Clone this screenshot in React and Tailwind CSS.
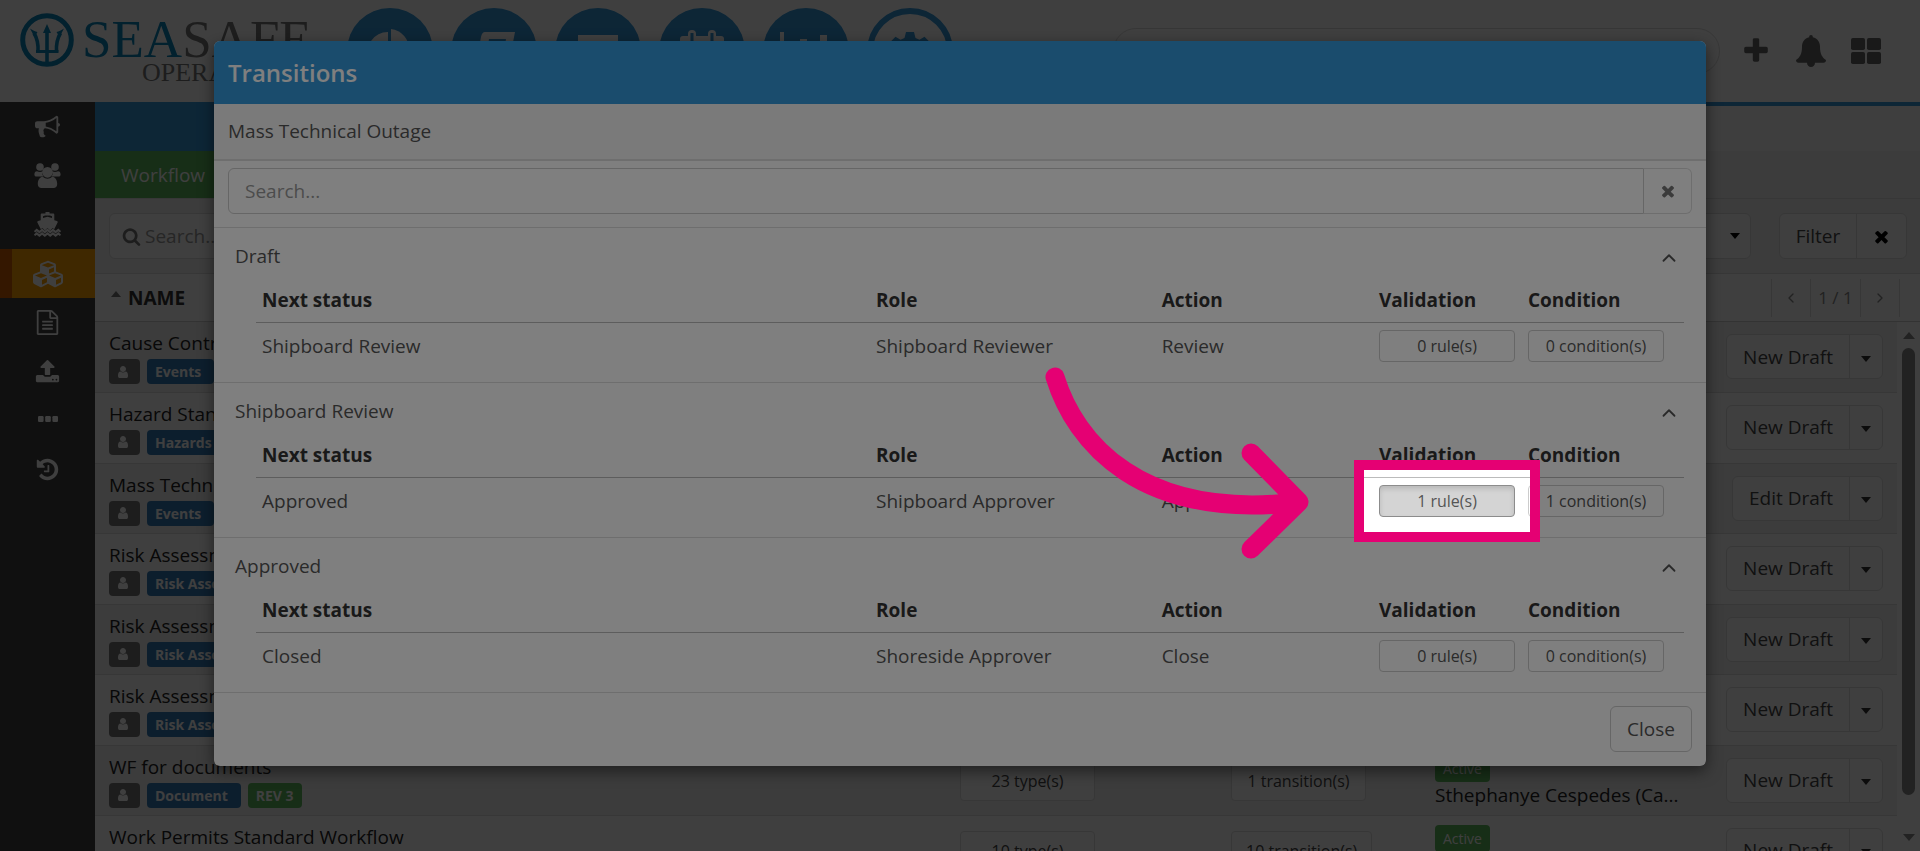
// src/App.jsx

import React, { useState } from 'react';
import clsx from 'clsx';
import { ChevronLeft, ChevronRight, ChevronUp } from 'lucide-react';
import { FaCubes } from 'react-icons/fa';

// Font Awesome 4 glyphs, drawn on the 1792 grid
const glyphs = {
  bullhorn:
    'M1664 640q53 0 90.5 37.5t37.5 90.5-37.5 90.5-90.5 37.5v384q0 52-38 90t-90 38q-417-347-812-380-58 19-91 66t-31 100.5 40 92.5q-20 33-23 65.5t6 58 33.5 55 48 50 61.5 50.5q-29 58-111.5 83t-168.5 11.5-132-55.5q-7-23-29.5-87.5t-32-94.5-23-89-15-101 3.5-98.5 22-110.5h-122q-66 0-113-47t-47-113v-192q0-66 47-113t113-47h480q435 0 896-384 52 0 90 38t38 90v384zm-128 604v-954q-394 302-768 343v270q377 42 768 341z',
  times:
    'M1490 1322q0 40-28 68l-136 136q-28 28-68 28t-68-28l-294-294-294 294q-28 28-68 28t-68-28l-136-136q-28-28-28-68t28-68l294-294-294-294q-28-28-28-68t28-68l136-136q28-28 68-28t68 28l294 294 294-294q28-28 68-28t68 28l136 136q28 28 28 68t-28 68l-294 294 294 294q28 28 28 68z',
  search:
    'M1216 832q0-185-131.5-316.5t-316.5-131.5-316.5 131.5-131.5 316.5 131.5 316.5 316.5 131.5 316.5-131.5 131.5-316.5zm512 832q0 52-38 90t-90 38q-54 0-90-38l-343-342q-179 124-399 124-143 0-273.5-55.5t-225-150-150-225-55.5-273.5 55.5-273.5 150-225 225-150 273.5-55.5 273.5 55.5 225 150 150 225 55.5 273.5q0 220-124 399l343 343q37 37 37 90z',
  user:
    'M1536 1399q0 109-62.5 187t-150.5 78h-854q-88 0-150.5-78t-62.5-187q0-85 8.5-160.5t31.5-152 58.5-131 94-89 134.5-34.5q131 128 313 128t313-128q76 0 134.5 34.5t94 89 58.5 131 31.5 152 8.5 160.5zm-256-887q0 159-112.5 271.5t-271.5 112.5-271.5-112.5-112.5-271.5 112.5-271.5 271.5-112.5 271.5 112.5 112.5 271.5z',
  plus:
    'M1600 736v192q0 40-28 68t-68 28h-416v416q0 40-28 68t-68 28h-192q-40 0-68-28t-28-68v-416h-416q-40 0-68-28t-28-68v-192q0-40 28-68t68-28h416v-416q0-40 28-68t68-28h192q40 0 68 28t28 68v416h416q40 0 68 28t28 68z',
  history:
    'M1664 896q0 156-61 298t-164 245-245 164-298 61q-172 0-327-72.5t-264-204.5q-7-10-6.5-22.5t8.5-20.5l137-138q10-9 25-9 16 2 23 12 73 95 179 147t225 52q104 0 198.5-40.5t163.5-109.5 109.5-163.5 40.5-198.5-40.5-198.5-109.5-163.5-163.5-109.5-198.5-40.5q-98 0-188 35.5t-160 101.5l137 138q31 30 14 69-17 40-59 40h-448q-26 0-45-19t-19-45v-448q0-42 40-59 39-17 69 14l130 129q107-101 244.5-156.5t284.5-55.5q156 0 298 61t245 164 164 245 61 298zm-640-288v448q0 14-9 23t-23 9h-320q-14 0-23-9t-9-23v-64q0-14 9-23t23-9h224v-352q0-14 9-23t23-9h64q14 0 23 9t9 23z',
  fileText:
    'M1596 380q28 28 48 76t20 88v1152q0 40-28 68t-68 28h-1344q-40 0-68-28t-28-68v-1600q0-40 28-68t68-28h896q40 0 88 20t76 48zm-444-244v376h376q-10-29-22-41l-313-313q-12-12-41-22zm384 1528v-1024h-416q-40 0-68-28t-28-68v-416h-768v1536h1280zm-1024-864q0-14 9-23t23-9h704q14 0 23 9t9 23v64q0 14-9 23t-23 9h-704q-14 0-23-9t-9-23v-64zm736 224q14 0 23 9t9 23v64q0 14-9 23t-23 9h-704q-14 0-23-9t-9-23v-64q0-14 9-23t23-9h704zm0 256q14 0 23 9t9 23v64q0 14-9 23t-23 9h-704q-14 0-23-9t-9-23v-64q0-14 9-23t23-9h704z',
  upload:
    'M1344 1472q0-26-19-45t-45-19-45 19-19 45 19 45 45 19 45-19 19-45zm256 0q0-26-19-45t-45-19-45 19-19 45 19 45 45 19 45-19 19-45zm128-224v320q0 40-28 68t-68 28h-1472q-40 0-68-28t-28-68v-320q0-40 28-68t68-28h427q21 56 70.5 92t110.5 36h256q61 0 110.5-36t70.5-92h427q40 0 68 28t28 68zm-325-648q-17 40-59 40h-256v448q0 26-19 45t-45 19h-256q-26 0-45-19t-19-45v-448h-256q-42 0-59-40-17-39 14-69l448-448q18-19 45-19t45 19l448 448q31 30 14 69z',
};

const Glyph = ({ name, className }) => (
  <svg viewBox="0 0 1792 1792" fill="currentColor" className={className} aria-hidden="true">
    <path d={glyphs[name]} />
  </svg>
);

const Caret = ({ up, className }) => (
  <svg viewBox="0 0 10 6" fill="currentColor" className={clsx('h-[6px] w-[10px]', className)} aria-hidden="true">
    <path d={up ? 'M0 6 5 0l5 6z' : 'M0 0h10L5 6z'} />
  </svg>
);

const UsersIcon = () => (
  <svg viewBox="0 0 27 25" fill="currentColor" className="h-[25px] w-[27px]" aria-hidden="true">
    <circle cx="6" cy="4" r="3.8" />
    <circle cx="21" cy="4" r="3.8" />
    <path d="M3 8.2c1.800 1 3.800 1 5.400.3-.6 2 .2 4 1.200 5.100H2.800C1 13.600.4 12.500.4 11.500.4 10 1 8.200 3 8.200zM24 8.200c-1.800 1-3.800 1-5.400.3.6 2-.2 4-1.200 5.100h6.800c1.800 0 2.400-1.100 2.400-2.100 0-1.500-.6-3.300-2.600-3.300z" />
    <circle cx="13.500" cy="9.300" r="5.400" />
    <path d="M8.800 13.700c2.800 2.600 6.600 2.600 9.400 0 3.400.2 5 3.800 5 7.300 0 2.500-1.600 4-3.700 4h-12c-2.100 0-3.700-1.500-3.700-4 0-3.500 1.600-7.100 5-7.300z" />
  </svg>
);

const ShipIcon = () => (
  <svg viewBox="0 0 27 25" fill="currentColor" className="h-[25px] w-[27px]" aria-hidden="true">
    <path
      fillRule="evenodd"
      d="M11.500 0h4v1.500h3.500c.8 0 1.300.5 1.300 1.300v5.500l2.600.8c.8.3 1 1 .6 1.600l-3.300 6.600-1.600-1.200-2.500 2.300-2.600-2.300-2.600 2.300-2.500-2.300-1.600 1.200-3.300-6.600c-.4-.6-.2-1.300.6-1.600l2.600-.8V2.800c0-.8.5-1.300 1.300-1.300h3.500zM9 4.200v1.800l4.500-1.300L18 6V4.200l-2-.7h-5z"
    />
    <path
      d="M.5 19.800l2.200-1.900 2.700 2.200 2.700-2.200 2.700 2.200 2.700-2.200 2.700 2.200 2.700-2.200 2.700 2.200 2.700-2.200 2.200 1.900M.5 23.300l2.200-1.900 2.700 2.200 2.700-2.200 2.700 2.200 2.700-2.200 2.700 2.200 2.700-2.200 2.700 2.200 2.700-2.200 2.200 1.900"
      fill="none"
      stroke="currentColor"
      strokeWidth="2"
    />
  </svg>
);

const DotsIcon = () => (
  <svg viewBox="0 0 20 10" fill="currentColor" className="h-[10px] w-5" aria-hidden="true">
    <rect width="5.600" height="6" rx="1.200" />
    <rect x="7.200" width="5.600" height="6" rx="1.200" />
    <rect x="14.400" width="5.600" height="6" rx="1.200" />
  </svg>
);

const BellIcon = () => (
  <svg viewBox="0 0 30 32" fill="currentColor" className="h-8 w-[30px]" aria-hidden="true">
    <path d="M15 0c1.200 0 1.900.8 1.800 2.200 4.800 1 7.200 5 7.200 9.300 0 7.500 2.200 11 6 13.500 0 1.700-1 2.700-2.400 2.700H19c0 2.500-1.700 4.300-4 4.300s-4-1.800-4-4.300H2.400C1 27.700 0 26.700 0 25c3.800-2.500 6-6 6-13.500 0-4.300 2.400-8.300 7.200-9.300C13.100.8 13.800 0 15 0z" />
  </svg>
);

const GridIcon = () => (
  <svg viewBox="0 0 30 26" fill="currentColor" className="h-[26px] w-[30px]" aria-hidden="true">
    <rect width="14" height="12" rx="1.800" />
    <rect x="16" width="14" height="12" rx="1.800" />
    <rect y="14" width="14" height="12" rx="1.800" />
    <rect x="16" y="14" width="14" height="12" rx="1.800" />
  </svg>
);

const Trident = () => (
  <svg viewBox="0 0 54 54" className="size-[54px]" fill="none" stroke="#0b84b8" aria-hidden="true">
    <circle cx="27" cy="27" r="24.300" strokeWidth="5" />
    <path d="M27 16v35" strokeWidth="3.600" />
    <path d="M16 38.500h22.500" strokeWidth="3" />
    <path d="M18 39c.5-7-1-14-4-19M36.500 39c-.5-7 1-14 4-19" strokeWidth="3.600" />
    <path d="M27 11l4 9h-8zM10 15.500c3 2 5 3 7.500 3.500l-3 5zM44 15.500c-3 2-5 3-7.500 3.500l3 5z" fill="#0b84b8" stroke="none" />
  </svg>
);

const modules = [
  {
    label: 'Dashboard',
    icon: (
      <>
        <path d="M41 24a20 20 0 1 0 14 34L41 44z" />
        <path d="M44 21a20 20 0 0 1 18 21H44z" />
      </>
    ),
  },
  {
    label: 'Forms',
    icon: <path d="M34 24h30l-7 36H24l6-31q1-5 4-5zm4 7-1 6h17l1-6z" fillRule="evenodd" />,
  },
  { label: 'Documents', icon: <path d="M23 27h40v32H23z" /> },
  {
    label: 'Calendar',
    icon: (
      <>
        <path d="M24 28h38q3 0 3 3v30H21V31q0-3 3-3z" />
        <rect x="29" y="22" width="8" height="14" rx="4" />
        <rect x="49" y="22" width="8" height="14" rx="4" />
        <path d="M31.500 25h3v8h-3zM51.500 25h3v8h-3z" fill="#3498db" />
      </>
    ),
  },
  { label: 'Reports', icon: <path d="M17 24h4v34h48v4H17zM37 31h7v24h-7zM57 27h7v28h-7zM27 40h6v15h-6zM47 38h6v17h-6z" /> },
  {
    label: 'Settings',
    active: true,
    icon: (
      <path
        fill="#3498db"
        d="M39 24h8l1.500 6 4 1.700 5-3 4.500 4.500-3 5 1.800 4 5.700 1.500v6l-5.700 1.500-1.800 4 3 5-4.500 4.500-5-3-4 1.700-1.500 6h-8l-1.500-6-4-1.700-5 3-4.500-4.500 3-5-1.800-4-5.700-1.500v-6l5.700-1.500 1.800-4-3-5 4.500-4.500 5 3 4-1.700z"
      />
    ),
  },
];

const sideItems = [
  { label: 'Events', icon: <Glyph name="bullhorn" className="size-[25px]" /> },
  { label: 'Crew', icon: <UsersIcon /> },
  { label: 'Vessels', icon: <ShipIcon /> },
  { label: 'Workflows', icon: <FaCubes className="size-[30px]" />, active: true },
  { label: 'Documents', icon: <Glyph name="fileText" className="size-[25px]" /> },
  { label: 'Upload', icon: <Glyph name="upload" className="size-[25px]" /> },
  { label: 'More', icon: <DotsIcon /> },
  { label: 'History', icon: <Glyph name="history" className="size-[25px]" /> },
];

const workflows = [
  { name: 'Cause Control', tag: 'Events', action: 'New Draft' },
  { name: 'Hazard Standard', tag: 'Hazards', action: 'New Draft' },
  { name: 'Mass Technical', tag: 'Events', action: 'Edit Draft' },
  { name: 'Risk Assessment', tag: 'Risk Asses', action: 'New Draft' },
  { name: 'Risk Assessment', tag: 'Risk Asses', action: 'New Draft' },
  { name: 'Risk Assessment', tag: 'Risk Asses', action: 'New Draft' },
  {
    name: 'WF for documents',
    tag: 'Document',
    rev: 'REV 3',
    types: '23 type(s)',
    transitions: '1 transition(s)',
    status: 'Active',
    owner: 'Sthephanye Cespedes (Ca...',
    action: 'New Draft',
  },
  {
    name: 'Work Permits Standard Workflow',
    types: '10 type(s)',
    transitions: '10 transition(s)',
    status: 'Active',
    action: 'New Draft',
  },
];

const sections = [
  { title: 'Draft', next: 'Shipboard Review', role: 'Shipboard Reviewer', action: 'Review', rules: 0, conditions: 0 },
  {
    title: 'Shipboard Review',
    next: 'Approved',
    role: 'Shipboard Approver',
    action: 'Approve',
    rules: 1,
    conditions: 1,
    highlighted: true,
  },
  { title: 'Approved', next: 'Closed', role: 'Shoreside Approver', action: 'Close', rules: 0, conditions: 0 },
];

const Header = () => (
  <header className="flex h-[102px] shrink-0 items-center bg-white">
    <div className="flex h-full w-[347px] shrink-0 items-start gap-2 pt-[13px] pl-5">
      <Trident />
      <div className="flex flex-col items-start font-['Liberation_Serif',serif] text-[#777]">
        <span className="text-[53px] leading-[53px]">
          <span className="text-[#0b84b8]">SEA</span>SAFE
        </span>
        <span className="ml-[60px] text-[26px] leading-[14px]">OPERATIONS</span>
      </div>
    </div>
    <nav className="flex shrink-0 gap-[18px]">
      {modules.map((item) => (
        <a key={item.label} href="#" aria-label={item.label}>
          <svg viewBox="0 0 86 86" className="size-[86px]" fill="#fff">
            {item.active ? (
              <circle cx="43" cy="43" r="40" stroke="#3498db" strokeWidth="6" />
            ) : (
              <circle cx="43" cy="43" r="43" fill="#3498db" />
            )}
            {item.icon}
          </svg>
        </a>
      ))}
    </nav>
    <div className="ml-[160px] flex h-[46px] flex-1 items-center rounded-full border border-[#ddd] pl-4 text-[#777]">
      <Glyph name="search" className="size-5" />
      <input type="search" aria-label="Search everything" className="h-full flex-1 px-2 outline-none" />
    </div>
    <div className="flex items-center gap-[25px] pr-[39px] pl-[21px] text-[#666]">
      <button type="button" aria-label="Add">
        <Glyph name="plus" className="size-[30px]" />
      </button>
      <button type="button" aria-label="Notifications">
        <BellIcon />
      </button>
      <button type="button" aria-label="Applications">
        <GridIcon />
      </button>
    </div>
  </header>
);

const Sidebar = () => (
  <aside className="w-[95px] shrink-0 bg-[#424242]">
    {sideItems.map((item) => (
      <a
        key={item.label}
        href="#"
        aria-label={item.label}
        className={clsx(
          'flex h-[49px] items-center justify-center border-x-12 text-white',
          item.active ? 'border-l-[#d35f00] border-r-[#ffa000] bg-[#ffa000]' : 'border-transparent'
        )}
      >
        {item.icon}
      </a>
    ))}
  </aside>
);

const Toolbar = () => (
  <div className="flex h-[75px] shrink-0 items-center border-b border-[#ddd] bg-[#f3f3f3] pr-[13px] pl-[14px]">
    <div className="flex h-[46px] w-[420px] items-center gap-1 rounded-md border border-[#ddd] bg-white pl-3">
      <Glyph name="search" className="size-[19px] text-[#777]" />
      <input type="search" aria-label="Search workflows" placeholder="Search..." className="min-w-0 flex-1 outline-none placeholder:text-[#999]" />
    </div>
    <button type="button" aria-label="Choose view" className="ml-auto flex h-[46px] w-[220px] items-center justify-end rounded-md border border-[#ddd] bg-white pr-[10px] text-black">
      <Caret />
    </button>
    <div className="ml-7 flex h-[46px] rounded-md border border-[#ddd] bg-white text-[#444]">
      <button type="button" className="w-[77px] border-r border-[#ddd]">Filter</button>
      <button type="button" aria-label="Clear filter" className="flex w-[49px] items-center justify-center text-black">
        <Glyph name="times" className="size-[19px]" />
      </button>
    </div>
  </div>
);

const ListHeader = () => (
  <div className="flex h-[48px] shrink-0 items-center border-b border-[#ccc] bg-white pr-[20px] pl-4">
    <button type="button" className="flex items-start gap-[7px] font-bold text-[#333]">
      <Caret up className="mt-[6px] text-[#777]" />
      NAME
    </button>
    <div className="ml-auto flex h-[38px] items-center divide-x divide-[#ddd] border-x border-[#ddd] text-[17px] text-[#888]">
      <button type="button" aria-label="Previous page" className="flex h-full w-[39px] items-center justify-center">
        <ChevronLeft className="size-4" />
      </button>
      <span className="flex h-full w-[50px] items-center justify-center">1 / 1</span>
      <button type="button" aria-label="Next page" className="flex h-full w-[38px] items-center justify-center">
        <ChevronRight className="size-4" />
      </button>
    </div>
  </div>
);

const WorkflowRow = ({ row }) => (
  <tr className="border-b border-[#ddd] align-top odd:h-[70px] odd:bg-[#f0f0f0] even:h-[71px] even:bg-white">
    <td className="px-[14px] pt-2 text-[#222]">
      <div className="leading-[26px]">{row.name}</div>
      <div className="mt-[3px] flex gap-[7px] text-[14px] leading-[25px] font-bold text-white">
        <span className="flex h-[25px] w-[31px] items-center rounded-sm bg-[#777] pl-[7px]">
          <Glyph name="user" className="size-[14px]" />
        </span>
        {row.tag && <span className="h-[25px] rounded-sm bg-[#337ab7] pr-[13px] pl-2">{row.tag}</span>}
        {row.rev && <span className="h-[25px] rounded-sm bg-[#5cb85c] px-2">{row.rev}</span>}
      </div>
    </td>
    <td className="px-[14px] pt-[15px]">
      {row.types && (
        <button type="button" className="h-10 min-w-[135px] rounded-sm border border-[#ddd] bg-white px-[14px] text-base text-[#444]">
          {row.types}
        </button>
      )}
    </td>
    <td className="px-[14px] pt-[15px]">
      {row.transitions && (
        <button type="button" className="h-10 min-w-[135px] rounded-sm border border-[#ddd] bg-white px-[14px] text-base whitespace-nowrap text-[#444]">
          {row.transitions}
        </button>
      )}
    </td>
    <td className="px-[14px] pt-[9px] text-[#222]">
      {row.status && (
        <>
          <span className="block h-[27px] w-fit rounded-sm bg-[#5cb85c] px-2 text-[14px] leading-[27px] text-white">{row.status}</span>
          <div className="leading-[26px]">{row.owner}</div>
        </>
      )}
    </td>
    <td className="px-[14px] pt-3">
      <div className="ml-auto flex h-[45px] w-fit rounded-md border border-[#ddd] bg-white text-[#444]">
        <button type="button" className="border-r border-[#ddd] px-4">{row.action}</button>
        <button type="button" aria-label="More actions" className="flex w-8 items-center justify-center pt-1 text-[#333]">
          <Caret />
        </button>
      </div>
    </td>
  </tr>
);

const WorkflowList = () => (
  <main className="flex min-w-0 flex-1 flex-col border-t-4 border-[#3498db] bg-[#fafafa]">
    <div className="h-[45px] w-[400px] shrink-0 bg-[#3498db]" />
    <div className="flex h-[48px] shrink-0 border-b border-[#ddd] bg-[#f3f3f3]">
      <button type="button" className="bg-[#5cb85c] px-[26px] text-white">Workflow</button>
    </div>
    <Toolbar />
    <ListHeader />
    <div className="flex min-h-0 flex-1 overflow-hidden">
      <table aria-label="Workflows" className="h-fit min-w-0 flex-1 table-fixed border-collapse">
        <colgroup>
          <col />
          <col className="w-[271px]" />
          <col className="w-[204px]" />
          <col className="w-[276px]" />
          <col className="w-[200px]" />
        </colgroup>
        <tbody>
          {workflows.map((row, i) => (
            <WorkflowRow key={i} row={row} />
          ))}
        </tbody>
      </table>
      <div className="flex w-[23px] shrink-0 flex-col items-center bg-white py-[9px] text-[#888]" aria-hidden="true">
        <Caret up className="h-[9px] w-[12px]" />
        <div className="mt-2 h-[447px] w-[13px] rounded-full bg-[#888]" />
        <Caret className="mt-auto h-[9px] w-[12px]" />
      </div>
    </div>
  </main>
);

// Tour step marker: dims everything outside its frame
const Spotlight = () => (
  <span className="pointer-events-none absolute -inset-[25px] z-10 border-10 border-[#e50073] outline-[2000px] outline-black/50">
    <svg
      viewBox="0 0 280 220"
      className="absolute -top-[110px] right-full mr-[45px] h-[220px] w-[280px] max-w-none"
      fill="none"
      stroke="#e50073"
      strokeWidth="19"
      strokeLinecap="round"
      strokeLinejoin="round"
      aria-hidden="true"
    >
      <path d="M16 17C36 82 101 161 260 142M212 93l48 49-48 47" />
    </svg>
  </span>
);

const SmallButton = ({ active, children }) => (
  <button
    type="button"
    className={clsx(
      'h-8 w-[136px] rounded-sm border text-base leading-[30px]',
      active
        ? 'border-[#8c8c8c] bg-[#d4d4d4] shadow-[inset_0_3px_5px_rgba(0,0,0,0.125)]'
        : 'border-[#ccc] bg-white'
    )}
  >
    {children}
  </button>
);

const TransitionSection = ({ section }) => {
  const [open, setOpen] = useState(true);

  return (
    <section className="border-b border-[#ddd] pt-[15px] pr-[22px] pb-[20px] pl-[42px]">
      <button
        type="button"
        onClick={() => setOpen(!open)}
        className="-ml-[21px] flex w-[calc(100%+21px)] items-end justify-between pr-1 text-left leading-[26px]"
      >
        {section.title}
        <ChevronUp className={clsx('size-[22px]', !open && 'rotate-180')} />
      </button>
      {open && (
        <table className="w-full table-fixed border-collapse text-left">
          <thead>
            <tr className="border-b border-[#bbb] leading-[26px] text-[#333]">
              <th className="w-[43%] px-[6px] pt-[18px] pb-[9px]">Next status</th>
              <th className="w-[20%] px-[6px] pt-[18px] pb-[9px]">Role</th>
              <th className="px-[6px] pt-[18px] pb-[9px]">Action</th>
              <th className="w-[149px] px-[6px] pt-[18px] pb-[9px]">Validation</th>
              <th className="w-[162px] px-[6px] pt-[18px] pb-[9px]">Condition</th>
            </tr>
          </thead>
          <tbody>
            <tr>
              <td className="px-[6px] pt-[7px]">{section.next}</td>
              <td className="px-[6px] pt-[7px]">{section.role}</td>
              <td className="px-[6px] pt-[7px]">{section.action}</td>
              <td className="px-[6px] pt-[7px]">
                <div className="relative flex h-8 w-[136px]">
                  <SmallButton active={section.highlighted}>{section.rules} rule(s)</SmallButton>
                  {section.highlighted && <Spotlight />}
                </div>
              </td>
              <td className="px-[6px] pt-[7px]">
                <div className="flex h-8">
                  <SmallButton>{section.conditions} condition(s)</SmallButton>
                </div>
              </td>
            </tr>
          </tbody>
        </table>
      )}
    </section>
  );
};

const TransitionsModal = () => (
  <div role="dialog" aria-label="Transitions" className="w-[1492px] max-w-[96%] rounded-md bg-white text-[#555] shadow-[0_5px_15px_rgba(0,0,0,0.5)]">
    <h2 className="rounded-t-md bg-[#3498db] px-[14px] text-2xl leading-[63px] font-semibold text-white">Transitions</h2>
    <p className="border-b-2 border-[#ddd] bg-[#f5f5f5] px-[14px] leading-[55px]">Mass Technical Outage</p>
    <div className="flex border-b border-[#ddd] px-[14px] pt-[7px] pb-[13px]">
      <input
        type="search"
        aria-label="Search transitions"
        placeholder="Search..."
        className="h-[46px] min-w-0 flex-1 rounded-l-md border border-[#ccc] px-4 outline-none placeholder:text-[#999]"
      />
      <button type="button" aria-label="Clear search" className="flex h-[46px] w-12 items-center justify-center rounded-r-md border border-l-0 border-[#ddd] text-[#777]">
        <Glyph name="times" className="size-[18px]" />
      </button>
    </div>
    {sections.map((section) => (
      <TransitionSection key={section.title} section={section} />
    ))}
    <div className="flex justify-end px-[14px] pt-[13px] pb-[14px]">
      <button type="button" className="h-[46px] rounded-md border border-[#ccc] px-4">Close</button>
    </div>
  </div>
);

const App = () => (
  <div className="relative flex h-screen flex-col overflow-hidden bg-white font-['Open_Sans',sans-serif] text-[19px] leading-[26px]">
    <Header />
    <div className="flex min-h-0 flex-1">
      <Sidebar />
      <WorkflowList />
    </div>
    <div className="absolute inset-0 flex items-start justify-center overflow-hidden bg-black/50 pt-[41px]">
      <TransitionsModal />
    </div>
  </div>
);

export default App;
